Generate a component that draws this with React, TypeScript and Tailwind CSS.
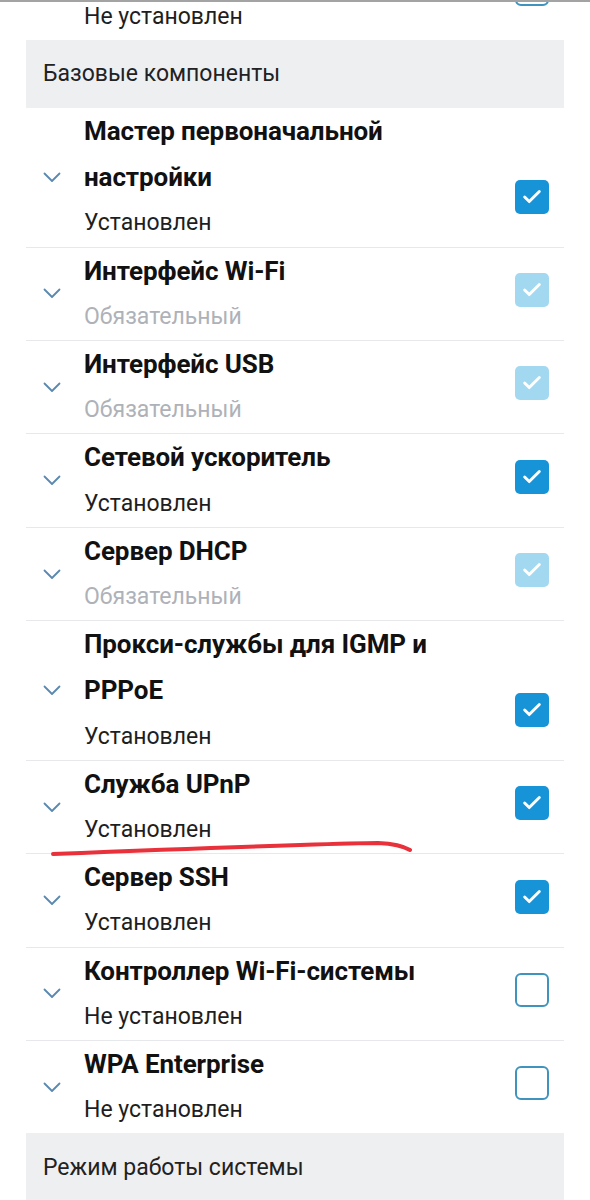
import { Check } from "lucide-react";

type Item = {
  title: string[];
  status: "installed" | "required" | "none";
};

const items: Item[] = [
  { title: ["Мастер первоначальной", "настройки"], status: "installed" },
  { title: ["Интерфейс Wi-Fi"], status: "required" },
  { title: ["Интерфейс USB"], status: "required" },
  { title: ["Сетевой ускоритель"], status: "installed" },
  { title: ["Сервер DHCP"], status: "required" },
  { title: ["Прокси-службы для IGMP и", "PPPoE"], status: "installed" },
  { title: ["Служба UPnP"], status: "installed" },
  { title: ["Сервер SSH"], status: "installed" },
  { title: ["Контроллер Wi-Fi-системы"], status: "none" },
  { title: ["WPA Enterprise"], status: "none" },
];

const statusText = {
  installed: "Установлен",
  required: "Обязательный",
  none: "Не установлен",
};

const Chevron = () => (
  <svg width="18" height="11" viewBox="0 0 18 11" fill="none" className="shrink-0">
    <path d="M1.5 1.5 L9 9 L16.5 1.5" stroke="#5a88b0" strokeWidth="1.8" strokeLinecap="round" strokeLinejoin="round" />
  </svg>
);

const Box = ({ status }: { status: Item["status"] }) => {
  if (status === "none") {
    return <div className="w-[34px] h-[34px] rounded-[6px] border-2 border-[#3f93bd] bg-white" />;
  }
  return (
    <div
      className={
        "w-[34px] h-[34px] rounded-[5px] flex items-center justify-center " +
        (status === "installed" ? "bg-[#1793d8]" : "bg-[#a3d8f1]")
      }
    >
      <Check className="w-[22px] h-[22px] text-white" strokeWidth={3.2} />
    </div>
  );
};

const Row = ({ item, first }: { item: Item; first?: boolean }) => (
  <div className={"flex items-center " + (first ? "" : "border-t border-[#e6e8eb]")}>
    <div className="w-[58px] pl-[17px] flex items-center">
      <Chevron />
    </div>
    <div className="flex-1">
      {item.title.map((t) => (
        <div key={t} className="text-[26px] leading-[46.2px] font-bold text-[#111] tracking-[-0.1px]">
          {t}
        </div>
      ))}
      <div
        className={
          "text-[23px] leading-[46.2px] " +
          (item.status === "required" ? "text-[#aeb2b8]" : "text-[#1e1e1e]")
        }
      >
        {statusText[item.status]}
      </div>
    </div>
    <div className="self-end mb-[33px] mr-[15px]">
      <Box status={item.status} />
    </div>
  </div>
);

export default function App() {
  return (
    <div
      className="relative w-[590px] h-[1200px] overflow-hidden bg-white border-t-2 border-[#a3a3a3]"
      style={{ fontFamily: "Roboto, 'Noto Sans', sans-serif" }}
    >
      <div className="mx-[26px]">
        <div className="flex h-[38px] items-end overflow-hidden">
          <div className="w-[58px]" />
          <div className="flex-1 text-[23px] leading-[46px] text-[#1e1e1e]">Не установлен</div>
          <div className="self-end mb-[34px] mr-[15px]">
            <Box status="none" />
          </div>
        </div>
        <div className="h-[68px] bg-[#eeeff1] flex items-center pl-[17px] text-[23px] text-[#222]">
          Базовые компоненты
        </div>
        {items.map((it, i) => (
          <Row key={it.title[0]} item={it} first={i === 0} />
        ))}
        <div className="h-[70px] bg-[#eeeff1] flex items-center pl-[17px] text-[23px] text-[#222]">
          Режим работы системы
        </div>
      </div>

      {/* hand-drawn annotation */}
      <svg className="absolute left-0 top-0 pointer-events-none" width="590" height="1200">
        <path
          d="M53 852 Q 200 846 300 843 Q 360 841 378 841 Q 400 842 410 848"
          stroke="#e8313a"
          strokeWidth="4"
          fill="none"
          strokeLinecap="round"
        />
      </svg>
    </div>
  );
}
